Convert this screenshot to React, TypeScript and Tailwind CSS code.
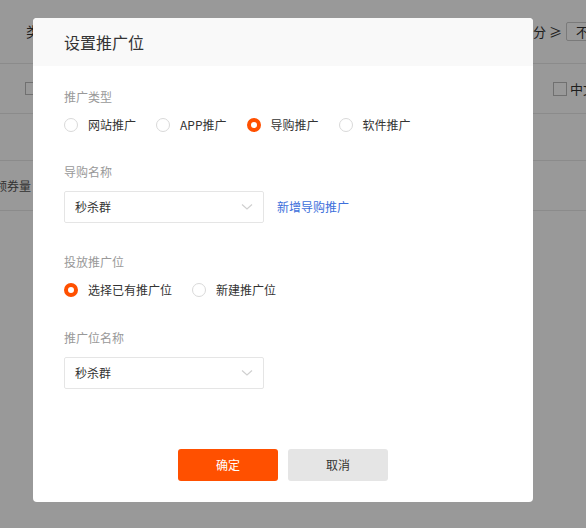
import React from 'react';

const font = { fontFamily: '"Noto Sans CJK SC", "Noto Sans", sans-serif' };

const Radio = ({ label, checked }: { label: string; checked?: boolean }) => (
  <label className="flex items-center mr-[20px] cursor-pointer">
    {checked ? (
      <span className="w-[14px] h-[14px] rounded-full border-[4px] border-[#ff5000] bg-white" />
    ) : (
      <span className="w-[14px] h-[14px] rounded-full border border-[#d9d9d9] bg-white" />
    )}
    <span className="ml-[10px] text-[12px] leading-[20px] text-[#333]">{label}</span>
  </label>
);

const Select = ({ value }: { value: string }) => (
  <div className="w-[200px] h-[32px] border border-[#e5e5e5] rounded-[2px] flex items-center justify-between pl-[10px] pr-[10px] bg-white">
    <span className="text-[12px] text-[#333]">{value}</span>
    <svg width="12" height="8" viewBox="0 0 12 8" fill="none">
      <polyline points="1,1.5 6,6 11,1.5" stroke="#d0d0d0" strokeWidth="1.2" />
    </svg>
  </div>
);

const FieldLabel = ({ children }: { children: React.ReactNode }) => (
  <div className="text-[12px] leading-[18px] text-[#999]">{children}</div>
);

export default function App() {
  return (
    <div className="relative w-[586px] h-[528px] overflow-hidden bg-white" style={font}>
      {/* page behind the dialog */}
      <div className="w-full">
        <div className="h-[64px] border-b border-[#e8e8e8] flex items-center justify-between pl-[26px]">
          <span className="text-[14px] text-[#333]">类目</span>
          <div className="flex items-center mr-[-20px]">
            <span className="text-[13px] text-[#333]">评分 ≥</span>
            <div className="ml-[4px] w-[40px] h-[19px] border border-[#ccc] rounded-[2px] flex items-center pl-[9px] text-[13px] text-[#333]">
              不
            </div>
          </div>
        </div>
        <div className="h-[50px] border-b border-[#e8e8e8] flex items-center justify-between pl-[25px]">
          <span className="w-[13px] h-[13px] border border-[#bbb]" />
          <div className="flex items-center mr-[-10px]">
            <span className="w-[14px] h-[14px] border border-[#bbb]" />
            <span className="ml-[3px] text-[13px] text-[#333]">中文</span>
          </div>
        </div>
        <div className="h-[47px] border-b border-[#e8e8e8]" />
        <div className="h-[50px] border-b border-[#e8e8e8] flex items-center">
          <span className="ml-[-5px] text-[12px] text-[#555]">领券量</span>
        </div>
      </div>

      {/* mask */}
      <div className="absolute inset-0 bg-black/40" />

      {/* dialog */}
      <div className="absolute left-[33px] top-[18px] w-[500px] h-[484px] bg-white rounded-[4px] overflow-hidden flex flex-col">
        <div className="h-[48px] bg-[#f9f9f9] flex items-center px-[31px]">
          <h3 className="text-[16px] text-[#333] font-normal">设置推广位</h3>
        </div>

        <div className="flex-1 px-[31px] pt-[22px] flex flex-col">
          <FieldLabel>推广类型</FieldLabel>
          <div className="flex items-center mt-[9px]">
            <Radio label="网站推广" />
            <Radio label="APP推广" />
            <Radio label="导购推广" checked />
            <Radio label="软件推广" />
          </div>

          <div className="mt-[28px]">
            <FieldLabel>导购名称</FieldLabel>
          </div>
          <div className="flex items-center mt-[10px]">
            <Select value="秒杀群" />
            <a className="ml-[13px] text-[12px] text-[#3d6fdb] cursor-pointer">新增导购推广</a>
          </div>

          <div className="mt-[30px]">
            <FieldLabel>投放推广位</FieldLabel>
          </div>
          <div className="flex items-center mt-[9px]">
            <Radio label="选择已有推广位" checked />
            <Radio label="新建推广位" />
          </div>

          <div className="mt-[29px]">
            <FieldLabel>推广位名称</FieldLabel>
          </div>
          <div className="mt-[10px]">
            <Select value="秒杀群" />
          </div>

          <div className="mt-auto mb-[21px] flex justify-center gap-[10px]">
            <button className="w-[100px] h-[32px] rounded-[3px] bg-[#ff5000] text-white text-[12px]">确定</button>
            <button className="w-[100px] h-[32px] rounded-[3px] bg-[#e5e5e5] text-[#333] text-[12px]">取消</button>
          </div>
        </div>
      </div>
    </div>
  );
}
